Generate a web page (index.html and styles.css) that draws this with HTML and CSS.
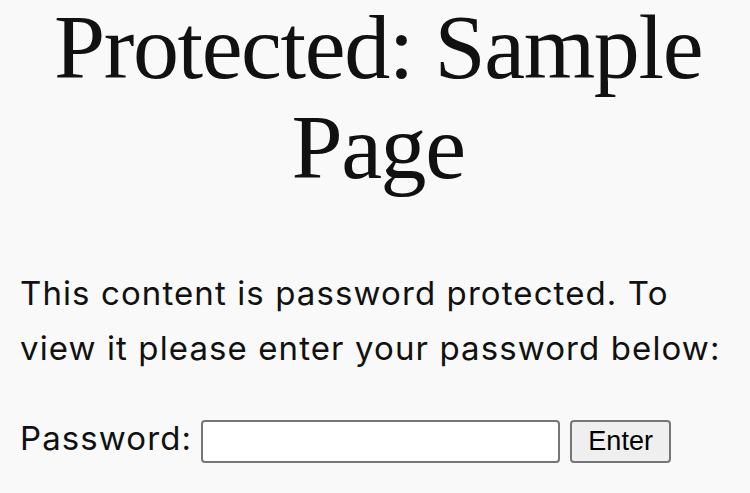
FILE: index.html
```html
<!DOCTYPE html>
<html lang="en">
<head>
<meta charset="UTF-8">
<meta name="viewport" content="width=device-width, initial-scale=1.0">
<title>Protected: Sample Page</title>
<link rel="stylesheet" href="styles.css">
</head>
<body>
<main class="entry">
    <h1 class="entry-title">Protected: Sample Page</h1>
    <form class="post-password-form" action="#" method="post">
        <p class="notice">This content is password protected. To view it please enter your password below:</p>
        <div class="pw-row">
            <label class="pw-label" for="pwbox">
                <span class="pw-text">Password:</span>
                <input class="pw-input" name="post_password" id="pwbox" type="password">
            </label>
            <input class="pw-submit" type="submit" value="Enter">
        </div>
    </form>
</main>
</body>
</html>
```

FILE: styles.css
```css
body {
    margin: 0;
    padding: 0;
    background-color: #f9f9f9;
    color: #111111;
    font-family: Inter, "Noto Sans", sans-serif;
}
.entry {
    padding: 0 14px 0 20px;
}
.entry-title {
    margin: -3px 0 0;
    font-family: "Liberation Serif", "Times New Roman", serif;
    font-size: 92px;
    font-weight: 400;
    letter-spacing: -1.4px;
    line-height: 100px;
    text-align: center;
}
.notice {
    margin: 69px 0 0;
    font-size: 33px;
    letter-spacing: 1.1px;
    line-height: 55px;
}
.pw-row {
    margin-top: 41px;
    display: flex;
    align-items: center;
}
.pw-label {
    display: flex;
    align-items: center;
    gap: 9px;
    font-size: 33px;
    letter-spacing: 1.1px;
    line-height: 43px;
}
.pw-text {
    padding-bottom: 6px;
}
.pw-input {
    box-sizing: border-box;
    width: 359px;
    height: 43px;
    margin: 0;
    border: 2px solid #767676;
    border-radius: 4px;
    background-color: #ffffff;
}
.pw-submit {
    box-sizing: border-box;
    width: 101px;
    height: 43px;
    margin: 0 0 0 10px;
    padding: 0 12px;
    border: 2px solid #767676;
    border-radius: 4px;
    background-color: #efefef;
    color: #000000;
    font-family: "Liberation Sans", Arial, sans-serif;
    font-size: 27px;
}
```
